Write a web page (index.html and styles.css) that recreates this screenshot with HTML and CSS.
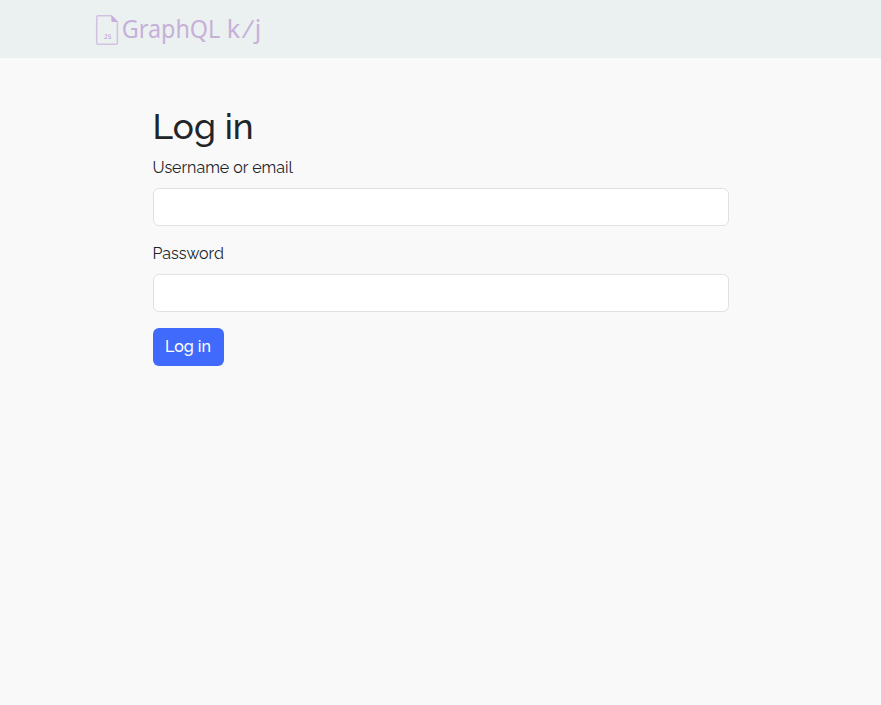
FILE: index.html
```html
<!DOCTYPE html>
<html lang="en">
<head>
<meta charset="utf-8">
<title>Log in</title>
<link rel="stylesheet" href="styles.css">
</head>
<body>
<header class="navbar">
  <a class="brand" href="#">
    <svg width="170" height="36" viewBox="0 0 170 36">
      <path class="page" d="M3.2 3.7H16.5L22.4 9.7V30.7Q22.4 32.2 20.9 32.2H3.2Q1.7 32.2 1.7 30.7V5.2Q1.7 3.7 3.2 3.7Z"/>
      <path class="fold" d="M16.3 3.3L22.9 10H17.8Q16.3 10 16.3 8.5Z"/>
      <text class="tag" x="8.4" y="26.5" textLength="8" lengthAdjust="spacingAndGlyphs">JS</text>
      <text class="name" x="26.8" y="26.4" textLength="98.5" lengthAdjust="spacingAndGlyphs">GraphQL</text>
      <text class="name" x="131.8" y="26.4">k</text>
      <text class="name" transform="translate(146.5 26.4) skewX(-12)">/</text>
      <text class="name" x="159.8" y="26.4">j</text>
    </svg>
  </a>
</header>
<main class="content">
  <h1>Log in</h1>
  <form>
    <div class="field">
      <label for="user">Username or email</label>
      <input id="user" type="text">
    </div>
    <div class="field">
      <label for="pass">Password</label>
      <input id="pass" type="password">
    </div>
    <button type="button">Log in</button>
  </form>
</main>
</body>
</html>
```
FILE: styles.css
```css
* { box-sizing: border-box; }
body {
  margin: 0;
  min-height: 100vh;
  background: #f9f9f9;
  color: #212529;
  font: 16px/24px Raleway, Lato, sans-serif;
}
.navbar {
  height: 58px;
  padding: 12px 95px;
  background: #ebf1f1;
}
.brand { display: block; height: 36px; }
.brand svg { display: block; }
.page { fill: none; stroke: #d3c1e0; stroke-width: 1.5; }
.fold { fill: #c6b0d8; }
.tag { fill: #c6b0d8; font: bold 6.5px "DejaVu Sans Mono", monospace; }
.name { fill: #c6b0d8; font: 25px "Noto Sans", sans-serif; }
.content { width: 576px; margin: 47px auto 0 152.5px; }
h1 {
  margin: 0 0 8px;
  font-size: 35.2px;
  line-height: 43px;
  font-weight: 500;
}
.field { margin-bottom: 16px; }
label { display: block; margin-bottom: 8px; }
input {
  display: block;
  width: 100%;
  height: 38px;
  padding: 6px 12px;
  border: 1px solid #dee2e6;
  border-radius: 6px;
  background: #fff;
  font: inherit;
}
button {
  display: block;
  width: 71px;
  height: 38px;
  padding: 0;
  border: 0;
  border-radius: 6px;
  background: #3f6afc;
  color: #fff;
  font: inherit;
  font-weight: 500;
}
```
